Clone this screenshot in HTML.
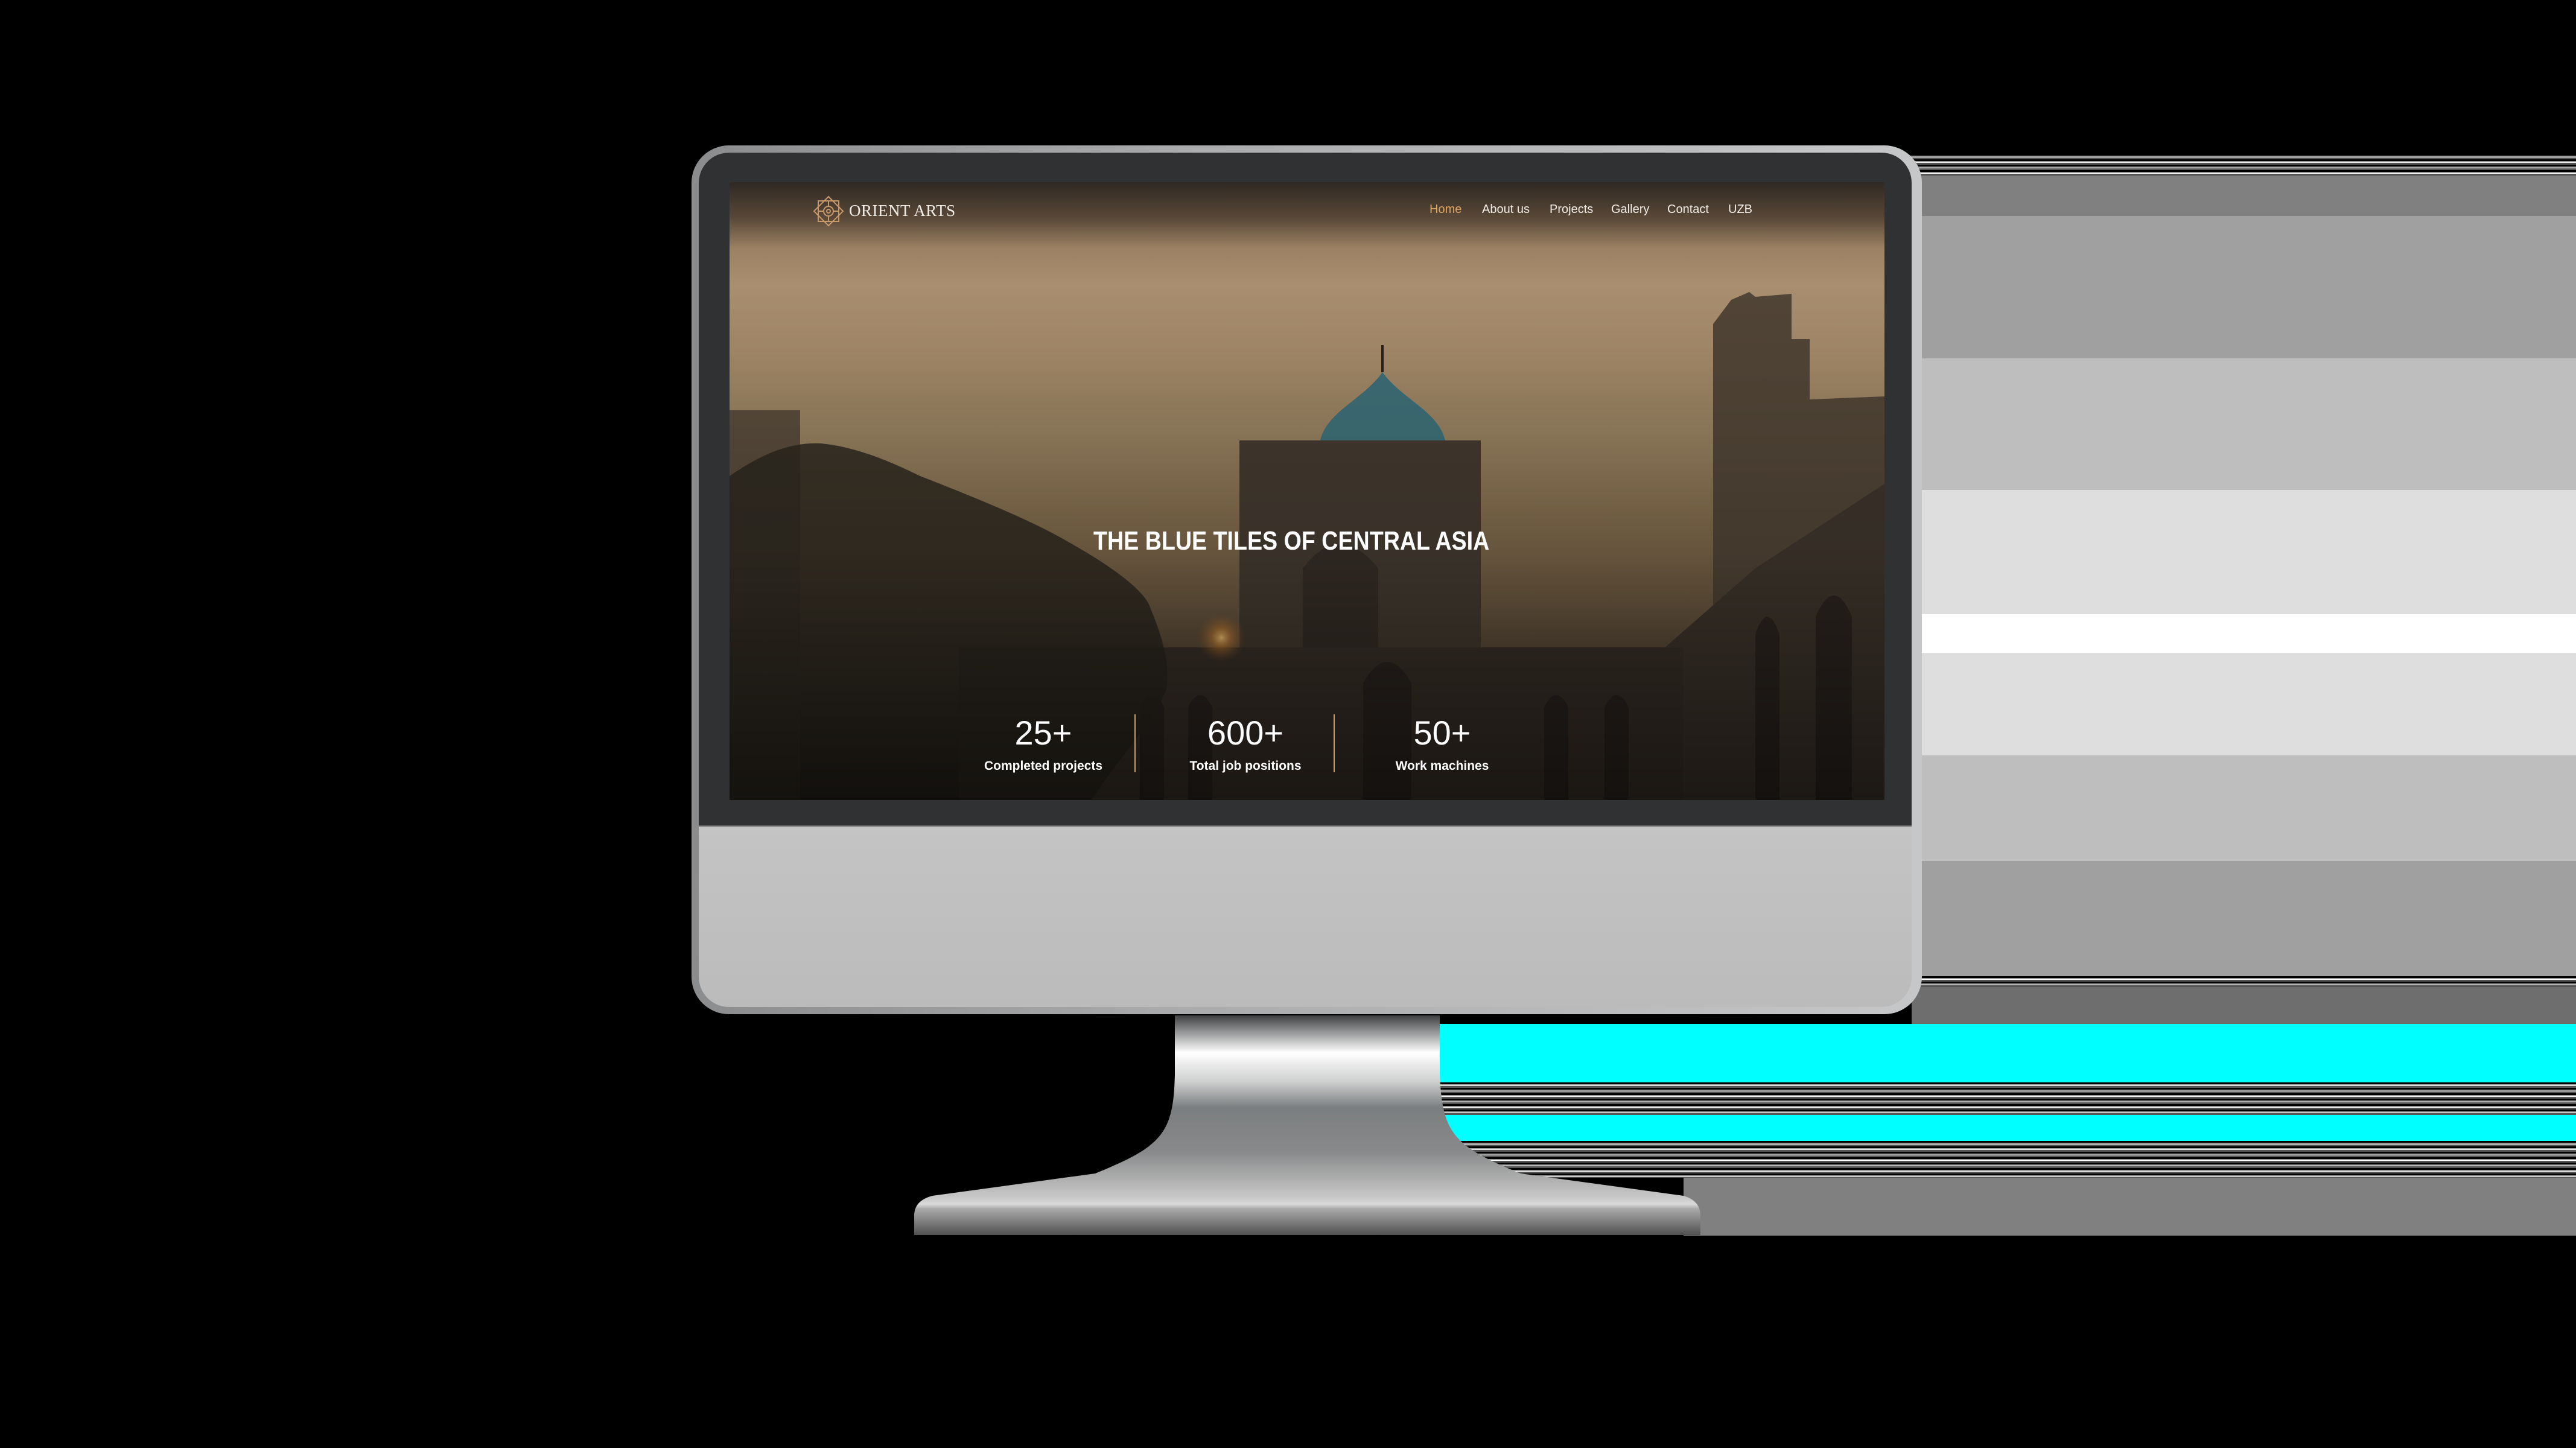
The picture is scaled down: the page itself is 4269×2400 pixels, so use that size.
<!DOCTYPE html>
<html><head><meta charset="utf-8">
<style>
html,body{margin:0;padding:0;}
body{width:4269px;height:2400px;background:#000;position:relative;overflow:hidden;font-family:"Liberation Sans",sans-serif;}
.abs{position:absolute;}
.stripes{background:repeating-linear-gradient(180deg,#000 0 3px,#9a9a9a 3px 5px,#fff 5px 6px,#555 6px 9px);}
.frame{left:1146px;top:241px;width:2039px;height:1440px;border-radius:62px;background:linear-gradient(90deg,#8a8c8e,#a9abad 40%,#c5c7c9);}
.inner{left:1158px;top:253px;width:2010px;height:1416px;border-radius:50px;background:linear-gradient(180deg,#e4e4e4,#bbbbbb);overflow:hidden;}
.bezel{left:0;top:0;width:2010px;height:1115px;background:#303133;border-bottom:2px solid #6a6a6a;}
.screen{left:1209px;top:302px;width:1914px;height:1024px;overflow:hidden;
background:linear-gradient(180deg,#2f2823 0px,#5b4a39 60px,#a08566 110px,#b09574 170px,#a98e6c 280px,#96805f 420px,#806a4c 560px,#6b5840 700px,#4e4233 820px,#2a2420 940px,#161413 1024px);}
.nav a{position:absolute;top:336px;color:#f2ede6;font-size:20px;text-decoration:none;white-space:nowrap;}
.num{color:#fff;font-size:56px;font-weight:300;text-align:center;width:300px;}
.lab{color:#fff;font-size:21px;font-weight:bold;text-align:center;width:300px;}
</style></head><body>

<div class="abs stripes" style="left:3140px;top:255px;width:1129px;height:36px"></div>
<div class="abs" style="left:3140px;top:291px;width:1129px;height:67px;background:#808080"></div>
<div class="abs" style="left:3140px;top:358px;width:1129px;height:236px;background:#a0a0a0"></div>
<div class="abs" style="left:3140px;top:594px;width:1129px;height:218px;background:#bebebe"></div>
<div class="abs" style="left:3140px;top:812px;width:1129px;height:206px;background:#dedede"></div>
<div class="abs" style="left:3140px;top:1018px;width:1129px;height:64px;background:#fff"></div>
<div class="abs" style="left:3140px;top:1082px;width:1129px;height:170px;background:#dedede"></div>
<div class="abs" style="left:3140px;top:1252px;width:1129px;height:175px;background:#bebebe"></div>
<div class="abs" style="left:3140px;top:1427px;width:1129px;height:191px;background:#a0a0a0"></div>
<div class="abs stripes" style="left:3140px;top:1618px;width:1129px;height:18px"></div>
<div class="abs" style="left:3168px;top:1636px;width:1101px;height:61px;background:#6e6e6e"></div>
<div class="abs" style="left:2386px;top:1697px;width:1883px;height:97px;background:#00ffff"></div>
<div class="abs stripes" style="left:2386px;top:1794px;width:1883px;height:54px"></div>
<div class="abs" style="left:2386px;top:1848px;width:1883px;height:43px;background:#00ffff"></div>
<div class="abs stripes" style="left:2386px;top:1891px;width:1883px;height:61px"></div>
<div class="abs" style="left:2790px;top:1952px;width:1479px;height:96px;background:#808080"></div>

<svg class="abs" style="left:0;top:0" width="4269" height="2400">
<defs>
<linearGradient id="st" x1="0" y1="1683" x2="0" y2="2047" gradientUnits="userSpaceOnUse">
<stop offset="0" stop-color="#3e3f40"/><stop offset="0.08" stop-color="#9a9b9c"/><stop offset="0.17" stop-color="#ffffff"/>
<stop offset="0.3" stop-color="#cfd0d0"/><stop offset="0.42" stop-color="#7b7e80"/><stop offset="0.62" stop-color="#88898a"/>
<stop offset="0.83" stop-color="#c8c8c8"/><stop offset="0.86" stop-color="#d9d9d9"/><stop offset="0.88" stop-color="#aaaaaa"/><stop offset="1" stop-color="#505050"/>
</linearGradient></defs>
<path d="M1947 1683 L2386 1683 L2386 1780 C2390 1880 2410 1900 2520 1945 L2790 1982 Q2818 1990 2818 2015 L2818 2047 L1515 2047 L1515 2015 Q1515 1990 1545 1982 L1815 1945 C1925 1900 1945 1880 1947 1780 Z" fill="url(#st)"/>
</svg>

<div class="abs frame"></div>
<div class="abs inner"><div class="abs bezel"></div></div>

<div class="abs screen">
<svg class="abs" style="left:0;top:0" width="1914" height="1024">
 <defs>
  <radialGradient id="sun"><stop offset="0" stop-color="#ffd27a" stop-opacity="0.9"/><stop offset="0.4" stop-color="#e08a30" stop-opacity="0.5"/><stop offset="1" stop-color="#a06030" stop-opacity="0"/></radialGradient>
  <linearGradient id="shade" x1="0" y1="0" x2="0" y2="1"><stop offset="0" stop-color="#000" stop-opacity="0"/><stop offset="0.6" stop-color="#000" stop-opacity="0.15"/><stop offset="1" stop-color="#000" stop-opacity="0.55"/></linearGradient>
 </defs>
 <rect x="0" y="378" width="117" height="646" fill="#4a3f33" opacity="0.8"/>
 <path d="M1630 1024 L1630 235 L1660 195 L1690 182 L1700 190 L1760 185 L1760 260 L1790 260 L1790 360 L1914 355 L1914 1024 Z" fill="#4a3f33" opacity="0.9"/>
 <path d="M1540 1024 L1540 780 L1700 640 L1914 500 L1914 1024Z" fill="#3e352c"/>
 <path d="M979 428 C990 380 1050 360 1082 315 C1115 360 1175 380 1186 428 Z" fill="#3f7079"/>
 <line x1="1082" y1="315" x2="1082" y2="270" stroke="#2a221c" stroke-width="4"/>
 <rect x="845" y="428" width="400" height="596" fill="#433a30"/>
 <path d="M950 800 L950 640 Q1010 560 1075 640 L1075 800Z" fill="#352d26"/>
 <rect x="380" y="771" width="1200" height="253" fill="#3a3129"/>
 <g fill="#2c2520">
  <path d="M680 1024 L680 870 Q700 830 720 870 L720 1024Z"/><path d="M760 1024 L760 870 Q780 830 800 870 L800 1024Z"/>
  <path d="M1050 1024 L1050 830 Q1090 760 1130 830 L1130 1024Z"/>
  <path d="M1450 1024 L1450 870 Q1470 830 1490 870 L1490 1024Z"/><path d="M1350 1024 L1350 870 Q1370 830 1390 870 L1390 1024Z"/>
  <path d="M1700 1024 L1700 750 Q1720 690 1740 750 L1740 1024Z"/><path d="M1800 1024 L1800 720 Q1830 650 1860 720 L1860 1024Z"/>
 </g>
 <path d="M0 487 C40 460 90 430 152 433 C220 440 280 470 316 487 C400 520 500 560 561 596 C640 640 690 680 697 705 C720 760 730 800 724 841 C700 900 640 960 600 1024 L0 1024Z" fill="#2c271e" opacity="0.85"/>
 <circle cx="815" cy="755" r="40" fill="url(#sun)"/>
 <rect x="0" y="0" width="1914" height="1024" fill="url(#shade)"/>
</svg>
</div>

<svg class="abs" style="left:1346px;top:323px" width="54" height="54" viewBox="-27 -27 54 54">
 <g fill="none" stroke="#c8996a" stroke-width="2">
  <rect x="-17" y="-17" width="34" height="34"/>
  <rect x="-17" y="-17" width="34" height="34" transform="rotate(45)"/>
  <circle r="8"/><circle r="3"/>
  <path d="M0 -17 L0 -8 M0 17 L0 8 M-17 0 L-8 0 M17 0 L8 0"/>
 </g>
</svg>
<div class="abs" style="left:1407px;top:334px;font-family:'Liberation Serif',serif;font-size:27px;color:#f0ece6;letter-spacing:0.5px;white-space:nowrap">ORIENT ARTS</div>

<div class="nav">
<a style="left:2369px;color:#e0a560">Home</a>
<a style="left:2456px">About us</a>
<a style="left:2568px">Projects</a>
<a style="left:2670px">Gallery</a>
<a style="left:2763px">Contact</a>
<a style="left:2864px">UZB</a>
</div>

<div class="abs" style="left:1812px;top:872px;width:654px;height:56px;overflow:visible">
<div style="font-size:44px;font-weight:bold;color:#fff;white-space:nowrap;transform:scaleX(0.855);transform-origin:0 0;">THE BLUE TILES OF CENTRAL ASIA</div>
</div>

<div class="abs num" style="left:1579px;top:1182px">25+</div>
<div class="abs num" style="left:1914px;top:1182px">600+</div>
<div class="abs num" style="left:2240px;top:1182px">50+</div>
<div class="abs lab" style="left:1579px;top:1258px">Completed projects</div>
<div class="abs lab" style="left:1914px;top:1258px">Total job positions</div>
<div class="abs lab" style="left:2240px;top:1258px">Work machines</div>
<div class="abs" style="left:1880px;top:1184px;width:2px;height:96px;background:#c9a06c"></div>
<div class="abs" style="left:2210px;top:1184px;width:2px;height:96px;background:#c9a06c"></div>

</body></html>
